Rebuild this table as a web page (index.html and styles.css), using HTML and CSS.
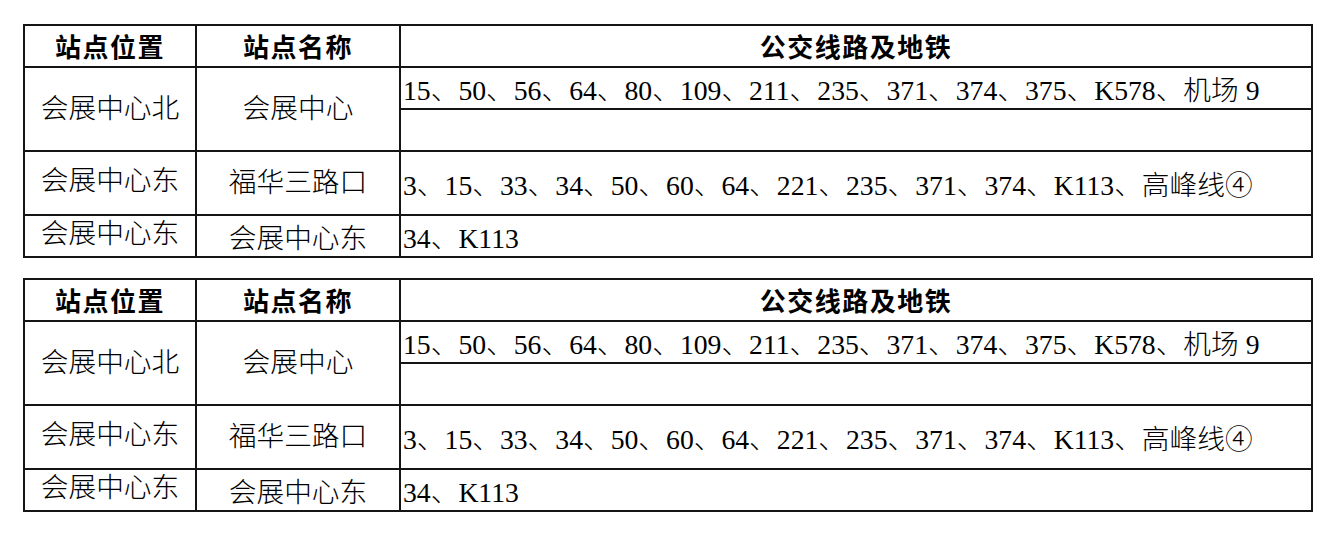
FILE: index.html
```html
<!DOCTYPE html>
<html lang="zh-CN">
<head>
<meta charset="utf-8">
<title>站点公交线路</title>
<link rel="stylesheet" href="styles.css">
</head>
<body>
<div class="page">
  <div class="grid">
    <div class="cell head">站点位置</div>
    <div class="cell head">站点名称</div>
    <div class="cell head">公交线路及地铁</div>
    <div class="cell c1 span2">会展中心北</div>
    <div class="cell c2 span2">会展中心</div>
    <div class="cell c3 low">15、50、56、64、80、109、211、235、371、374、375、K578、机场 9</div>
    <div class="cell c3"></div>
    <div class="cell c1 up">会展中心东</div>
    <div class="cell c2">福华三路口</div>
    <div class="cell c3 low">3、15、33、34、50、60、64、221、235、371、374、K113、高峰线④</div>
    <div class="cell c1 up">会展中心东</div>
    <div class="cell c2 low">会展中心东</div>
    <div class="cell c3 low">34、K113</div>
  </div>
  <div class="grid">
    <div class="cell head">站点位置</div>
    <div class="cell head">站点名称</div>
    <div class="cell head">公交线路及地铁</div>
    <div class="cell c1 span2">会展中心北</div>
    <div class="cell c2 span2">会展中心</div>
    <div class="cell c3 low">15、50、56、64、80、109、211、235、371、374、375、K578、机场 9</div>
    <div class="cell c3"></div>
    <div class="cell c1 up">会展中心东</div>
    <div class="cell c2">福华三路口</div>
    <div class="cell c3 low">3、15、33、34、50、60、64、221、235、371、374、K113、高峰线④</div>
    <div class="cell c1 up">会展中心东</div>
    <div class="cell c2 low">会展中心东</div>
    <div class="cell c3 low">34、K113</div>
  </div>
</div>
</body>
</html>
```

FILE: styles.css
```css
html, body {
  margin: 0;
  padding: 0;
  background: #ffffff;
}

.page {
  padding: 24px 0 0 23px;
  display: flex;
  flex-direction: column;
  gap: 20px;
  font-family: "Liberation Serif", "Noto Sans CJK SC", serif;
  font-size: 27.7px;
  font-weight: 300;
  color: #000000;
}

.grid {
  box-sizing: border-box;
  width: 1290px;
  display: grid;
  grid-template-columns: 172px 204px 912px;
  grid-template-rows: 42px 42px 42px 64px 42px;
  border-left: 2px solid #151515;
  border-top: 2px solid #151515;
}

.cell {
  box-sizing: border-box;
  border-right: 2px solid #151515;
  border-bottom: 2px solid #151515;
  display: flex;
  align-items: center;
  line-height: 30px;
  white-space: nowrap;
}

.head {
  justify-content: center;
  font-family: "Noto Sans CJK SC", sans-serif;
  font-weight: 700;
  font-size: 26px;
  letter-spacing: 1.5px;
}

.c1, .c2 {
  justify-content: center;
}

.c3 {
  padding-left: 2px;
}

.span2 {
  grid-row: span 2;
}

.up {
  padding-bottom: 5px;
}

.low {
  padding-top: 5px;
}
```
